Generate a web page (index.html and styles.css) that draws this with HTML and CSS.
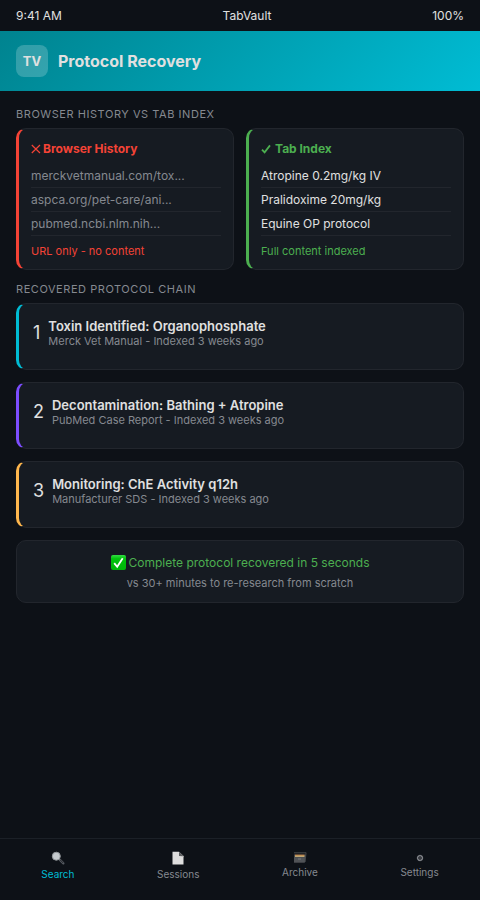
FILE: index.html
```html
<!DOCTYPE html>
<html lang="en">
<head>
<meta charset="utf-8">
<meta name="viewport" content="width=device-width, initial-scale=1">
<title>TabVault</title>
<link rel="stylesheet" href="styles.css">
</head>
<body>
<div class="status"><span>9:41 AM</span><span>TabVault</span><span>100%</span></div>
<header class="header">
  <div class="logo">TV</div>
  <h1 class="title">Protocol Recovery</h1>
</header>
<main class="content">
  <h2 class="label">Browser History vs Tab Index</h2>
  <div class="compare">
    <section class="card source source-history">
      <h3 class="source-title"><svg class="mark" viewBox="0 0 10 10" aria-hidden="true"><path d="M.8 1 9 9M9 1 .8 9" fill="none" stroke="currentColor" stroke-width="1.2"/></svg>Browser History</h3>
      <ul class="rows">
        <li>merckvetmanual.com/tox...</li>
        <li>aspca.org/pet-care/ani...</li>
        <li>pubmed.ncbi.nlm.nih...</li>
      </ul>
      <p class="note">URL only - no content</p>
    </section>
    <section class="card source source-index">
      <h3 class="source-title"><svg class="mark mark-check" viewBox="0 0 10 10" aria-hidden="true"><path d="M1 5.6 3.6 8.4 9 1.4" fill="none" stroke="currentColor" stroke-width="1.8"/></svg>Tab Index</h3>
      <ul class="rows">
        <li>Atropine 0.2mg/kg IV</li>
        <li>Pralidoxime 20mg/kg</li>
        <li>Equine OP protocol</li>
      </ul>
      <p class="note">Full content indexed</p>
    </section>
  </div>
  <h2 class="label">Recovered Protocol Chain</h2>
  <div class="chain">
    <article class="card step step-cyan">
      <span class="number">1</span>
      <div><h3 class="step-title">Toxin Identified: Organophosphate</h3><p class="meta">Merck Vet Manual - Indexed 3 weeks ago</p></div>
    </article>
    <article class="card step step-violet">
      <span class="number">2</span>
      <div><h3 class="step-title">Decontamination: Bathing + Atropine</h3><p class="meta">PubMed Case Report - Indexed 3 weeks ago</p></div>
    </article>
    <article class="card step step-amber">
      <span class="number">3</span>
      <div><h3 class="step-title">Monitoring: ChE Activity q12h</h3><p class="meta">Manufacturer SDS - Indexed 3 weeks ago</p></div>
    </article>
    <section class="card summary">
      <p class="result"><svg class="done" viewBox="0 0 15 15" aria-hidden="true"><defs><linearGradient id="g" x2="0" y2="1"><stop stop-color="#35dc45"/><stop offset=".25" stop-color="#00c40c"/><stop offset="1" stop-color="#00b50a"/></linearGradient></defs><rect width="15" height="15" rx="2" fill="url(#g)"/><path d="M3.2 8.2 6.2 11.8 11.7 3.2" fill="none" stroke="#fff" stroke-width="1.8"/></svg>Complete protocol recovered in 5 seconds</p>
      <p class="meta">vs 30+ minutes to re-research from scratch</p>
    </section>
  </div>
</main>
<nav class="nav">
  <a class="tab tab-active" href="#search"><svg class="icon" viewBox="0 0 14 14" aria-hidden="true"><path d="m8.4 8.4 4 4" stroke="#555a60" stroke-width="2.2" stroke-linecap="round"/><path d="m9.3 9 2.9 3" stroke="#181b20" stroke-width=".8"/><circle cx="5.3" cy="5.2" r="4" fill="#c5cace" stroke="#92979b"/></svg>Search</a>
  <a class="tab" href="#sessions"><svg class="icon" viewBox="0 0 14 14" aria-hidden="true"><path d="M1.5.7H8L12.5 5v8.5h-11z" fill="#dedede"/><path d="M8 .7V5h4.5z" fill="#5c5e60"/><path d="M8 5h4.5v1.2z" fill="#bcbcbc"/></svg>Sessions</a>
  <a class="tab" href="#archive"><svg class="icon icon-short" viewBox="0 0 14 12" aria-hidden="true"><path d="M1 1h11.5l1 .8-.8 8.4-1.2 1.3H1z" fill="#44474a"/><path d="M1 1.6h11.5v2H1z" fill="#202327"/><path d="M2 3.7h9.5v1H2z" fill="#db8b3c"/><path d="M2 4.7h9.5v1H2z" fill="#f1d28c"/><path d="M1 6.3h10.8v5.2H1z" fill="#505357"/><path d="M5 8h3" stroke="#777a7e"/></svg>Archive</a>
  <a class="tab" href="#settings"><svg class="icon icon-short" viewBox="0 0 14 12" aria-hidden="true"><circle cx="7" cy="7" r="2.4" fill="none" stroke="#898c91" stroke-width="1.3"/><circle cx="7" cy="7" r=".7" fill="#898c91"/><path d="M7 3.8v1M7 9.2v1M3.8 7h1M9.2 7h1" stroke="#777b80"/></svg>Settings</a>
</nav>
</body>
</html>
```
FILE: styles.css
```css
* { box-sizing: border-box; }
body, h1, h2, h3, p, ul { margin: 0; padding: 0; }
body {
  min-height: 100vh;
  display: flex;
  flex-direction: column;
  background: #0d1117;
  color: #e0e0e0;
  font-family: Inter, "Liberation Sans", sans-serif;
  font-size: 12px;
  line-height: 15px;
}
.status { display: flex; justify-content: space-between; padding: 8px 16px; }
.header {
  display: flex;
  align-items: center;
  gap: 10px;
  padding: 14px 16px;
  background: linear-gradient(135deg, #00838f, #00bcd4);
}
.logo {
  width: 32px;
  height: 32px;
  display: grid;
  place-items: center;
  border-radius: 8px;
  background: rgba(255, 255, 255, 0.2);
  font-size: 13px;
  font-weight: 700;
}
.title { font-size: 16px; line-height: 20px; font-weight: 700; }
.content { flex: 1; padding: 16px; }
.label {
  margin-bottom: 7px;
  color: #858990;
  font-size: 11px;
  line-height: 14px;
  font-weight: 400;
  letter-spacing: 0.05em;
  text-transform: uppercase;
}
.card {
  background: #161b22;
  border: 1px solid #22262d;
  border-radius: 10px;
}
.compare { display: grid; grid-template-columns: 1fr 1fr; gap: 12px; margin-bottom: 12px; }
.source { padding: 12px 12px 11px; border-left: 3px solid; }
.source-history { border-left-color: #f44336; }
.source-index { border-left-color: #4caf50; }
.source-title { margin-bottom: 8px; font-size: 12px; line-height: 15px; font-weight: 700; }
.mark { width: 10px; height: 10px; margin-right: 2px; vertical-align: -1px; }
.mark-check { margin-right: 4px; }
.source-history .source-title, .source-history .note { color: #f44336; }
.source-index .source-title, .source-index .note { color: #4caf50; }
.rows { list-style: none; }
.rows li { padding: 4px 0; border-bottom: 1px solid #22262d; }
.source-history .rows { color: #858990; }
.note { margin-top: 8px; font-size: 11px; line-height: 14px; }
.chain { display: grid; gap: 12px; }
.step { display: flex; gap: 8px; min-height: 67px; padding: 14px; border-left: 3px solid; }
.step-cyan { border-left-color: #00bcd4; }
.step-violet { border-left-color: #7c4dff; }
.step-amber { border-left-color: #ffb74d; }
.number { font-size: 18px; line-height: 30px; }
.step-title { font-size: 13px; line-height: 16px; font-weight: 600; }
.meta { color: #858990; font-size: 11px; line-height: 14px; }
.summary { padding: 12px; text-align: center; }
.result { margin-bottom: 4px; color: #4caf50; line-height: 19px; }
.done { width: 15px; height: 15px; margin-right: 3px; vertical-align: -3px; }
.nav {
  display: flex;
  justify-content: space-around;
  align-items: flex-start;
  min-height: 62px;
  padding: 12px 0;
  border-top: 1px solid #1b2027;
}
.tab {
  display: flex;
  flex-direction: column;
  align-items: center;
  gap: 3px;
  color: #858990;
  font-size: 10px;
  line-height: 12px;
  text-decoration: none;
}
.tab-active { color: #00bcd4; }
.icon { width: 14px; height: 14px; }
.icon-short { height: 12px; }
```
